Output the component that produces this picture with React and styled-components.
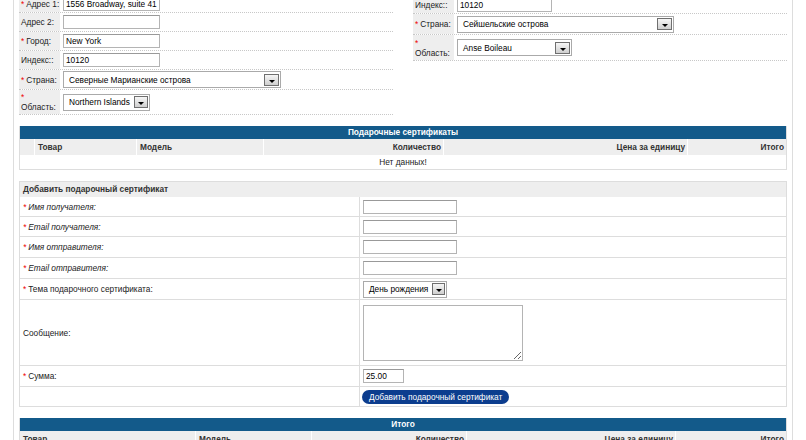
import React from 'react';
import styled, { createGlobalStyle } from 'styled-components';

const GlobalStyle = createGlobalStyle`
  body {
    margin: 0;
    background: #fff;
    font-family: "Liberation Sans", Arial, sans-serif;
    font-size: 8.3px;
    color: #222;
    overflow: hidden;
  }
`;

const Page = styled.div`
  margin: 0 13px;
  width: 780px;
  box-sizing: border-box;
  border-left: 1px solid #ddd;
  border-right: 1px solid #ddd;
  padding: 0 5px 40px;
`;

// ---- address blocks ----
const TopSection = styled.div`
  display: grid;
  grid-template-columns: 374px 374px;
  column-gap: 20px;
  align-items: start;
  margin-top: -4px;
`;

const AddrRow = styled.div`
  display: flex;
  height: ${p => p.$h || 19}px;
  box-sizing: border-box;
  border-bottom: 1px dotted #c8c8c8;
`;

const AddrLabel = styled.div`
  width: 41px;
  flex: none;
  box-sizing: border-box;
  background: #eee;
  padding: 0 2px;
  display: flex;
  align-items: center;
  white-space: nowrap;
  line-height: 10px;
`;

const AddrValue = styled.div`
  display: flex;
  align-items: center;
  padding-left: 3px;
`;

const Req = styled.span`
  color: #e00;
  margin-right: 2px;
`;

const TextInput = styled.input`
  width: ${p => p.$w || 97}px;
  height: 14px;
  box-sizing: border-box;
  border: 1px solid #b4b4b4;
  border-top-color: #999;
  padding: 0 2px;
  font-family: inherit;
  font-size: 8.3px;
  color: #000;
  background: #fff;
`;

const SelectBox = styled.div`
  display: inline-flex;
  align-items: center;
  justify-content: space-between;
  width: ${p => p.$w}px;
  height: 17px;
  box-sizing: border-box;
  border: 1px solid #aaa;
  padding: 0 1px 0 5px;
  background: #fff;
  color: #000;
  white-space: nowrap;
`;

const SelectBtn = styled.span`
  width: 15px;
  height: 12px;
  box-sizing: border-box;
  border: 1px solid #6f6f6f;
  background: linear-gradient(#f6f6f6, #cfcfcf);
  display: flex;
  align-items: flex-end;
  justify-content: center;
  padding-bottom: 2px;
  margin-left: 4px;
`;

const Arrow = styled.span`
  width: 0;
  height: 0;
  border-left: 3px solid transparent;
  border-right: 3px solid transparent;
  border-top: 3px solid #000;
`;

const Select = ({ w, children }) => (
  <SelectBox $w={w}>
    <span>{children}</span>
    <SelectBtn><Arrow /></SelectBtn>
  </SelectBox>
);

// ---- tables ----
const Table = styled.div`
  margin-top: 11px;
  border: 1px solid #ddd;
  border-top: 0;
`;

const BlueBar = styled.div`
  background: #135a8a;
  color: #fff;
  font-weight: bold;
  text-align: center;
  height: 13px;
  line-height: 13px;
`;

const GridRow = styled.div`
  display: grid;
  grid-template-columns: ${p => p.$cols};
`;

const HeadCell = styled.div`
  background: #eee;
  font-weight: bold;
  height: 16px;
  line-height: 16px;
  padding: 0 2px 0 3px;
  text-align: ${p => p.$align || 'left'};
  color: #333;
  & + & {
    border-left: 1px solid #fff;
  }
`;

const EmptyRow = styled.div`
  text-align: center;
  height: 14px;
  line-height: 14px;
  color: #222;
`;

const DataCell = styled.div`
  height: 18px;
  line-height: 18px;
  padding: 0 3px;
  border-top: 1px solid #ddd;
  text-align: ${p => p.$align || 'left'};
`;

// ---- gift form ----
const FormBox = styled.div`
  margin-top: 11px;
  border: 1px solid #ddd;
  border-bottom: 0;
`;

const FormHeader = styled.div`
  background: #eee;
  font-weight: bold;
  height: 15px;
  line-height: 15px;
  padding-left: 3px;
  color: #333;
`;

const FormRow = styled.div`
  display: flex;
  height: ${p => p.$h}px;
  box-sizing: border-box;
  border-bottom: 1px solid #ddd;
`;

const FormLabel = styled.div`
  width: 339px;
  flex: none;
  display: flex;
  align-items: center;
  padding-left: 3px;
  box-sizing: border-box;
  font-style: ${p => (p.$italic ? 'italic' : 'normal')};
`;

const FormValue = styled.div`
  flex: 1;
  display: flex;
  align-items: center;
  border-left: 1px solid #ddd;
  padding-left: 3px;
`;

const MessageArea = styled.textarea`
  width: 160px;
  height: 56px;
  box-sizing: border-box;
  border: 1px solid #b4b4b4;
  font-family: inherit;
  font-size: 8.3px;
`;

const Button = styled.button`
  height: 14px;
  line-height: 14px;
  padding: 0 7px;
  border: 0;
  border-radius: 7px;
  background: #0c3d8e;
  color: #fff;
  font-family: inherit;
  font-size: 8.3px;
  margin-left: -1px;
`;

const giftCols = '14px 102px 127px 180px 244px 99px';
const totalCols = '175px 116px 155px 209px 111px';

const leftAddr = [
  { label: 'Адрес 1:', req: true, value: '1556 Broadway, suite 41', h: 17 },
  { label: 'Адрес 2:', value: '' },
  { label: 'Город:', req: true, value: 'New York' },
  { label: 'Индекс::', value: '10120' },
];

const giftFields = [
  { label: 'Имя получателя:', italic: true },
  { label: 'Email получателя:', italic: true },
  { label: 'Имя отправителя:', italic: true },
  { label: 'Email отправителя:', italic: true },
];

export default function App() {
  return (
    <>
      <GlobalStyle />
      <Page>
        <TopSection>
          <div>
            {leftAddr.map(r => (
              <AddrRow key={r.label} $h={r.h}>
                <AddrLabel>{r.req && <Req>*</Req>}{r.label}</AddrLabel>
                <AddrValue><TextInput defaultValue={r.value} /></AddrValue>
              </AddrRow>
            ))}
            <AddrRow $h={20}>
              <AddrLabel><Req>*</Req>Страна:</AddrLabel>
              <AddrValue><Select w={218}>Северные Марианские острова</Select></AddrValue>
            </AddrRow>
            <AddrRow $h={25}>
              <AddrLabel><span><Req>*</Req><br />Область:</span></AddrLabel>
              <AddrValue><Select w={87}>Northern Islands</Select></AddrValue>
            </AddrRow>
          </div>
          <div>
            <AddrRow $h={18}>
              <AddrLabel>Индекс::</AddrLabel>
              <AddrValue><TextInput $w={95} defaultValue="10120" /></AddrValue>
            </AddrRow>
            <AddrRow $h={21}>
              <AddrLabel><Req>*</Req>Страна:</AddrLabel>
              <AddrValue><Select w={217}>Сейшельские острова</Select></AddrValue>
            </AddrRow>
            <AddrRow $h={26}>
              <AddrLabel><span><Req>*</Req><br />Область:</span></AddrLabel>
              <AddrValue><Select w={115}>Anse Boileau</Select></AddrValue>
            </AddrRow>
          </div>
        </TopSection>

        <Table>
          <BlueBar>Подарочные сертификаты</BlueBar>
          <GridRow $cols={giftCols}>
            <HeadCell />
            <HeadCell>Товар</HeadCell>
            <HeadCell>Модель</HeadCell>
            <HeadCell $align="right">Количество</HeadCell>
            <HeadCell $align="right">Цена за единицу</HeadCell>
            <HeadCell $align="right">Итого</HeadCell>
          </GridRow>
          <EmptyRow>Нет данных!</EmptyRow>
        </Table>

        <FormBox>
          <FormHeader>Добавить подарочный сертификат</FormHeader>
          {giftFields.map((f, i) => (
            <FormRow key={f.label} $h={i < 2 ? 20 : 21}>
              <FormLabel $italic={f.italic}><Req>*</Req>{f.label}</FormLabel>
              <FormValue><TextInput $w={94} /></FormValue>
            </FormRow>
          ))}
          <FormRow $h={21}>
            <FormLabel><Req>*</Req>Тема подарочного сертификата:</FormLabel>
            <FormValue><Select w={84}>День рождения</Select></FormValue>
          </FormRow>
          <FormRow $h={66}>
            <FormLabel>Сообщение:</FormLabel>
            <FormValue><MessageArea /></FormValue>
          </FormRow>
          <FormRow $h={21}>
            <FormLabel><Req>*</Req>Сумма:</FormLabel>
            <FormValue><TextInput $w={41} defaultValue="25.00" /></FormValue>
          </FormRow>
          <FormRow $h={20}>
            <FormLabel />
            <FormValue><Button>Добавить подарочный сертификат</Button></FormValue>
          </FormRow>
        </FormBox>

        <Table>
          <BlueBar>Итого</BlueBar>
          <GridRow $cols={totalCols}>
            <HeadCell>Товар</HeadCell>
            <HeadCell>Модель</HeadCell>
            <HeadCell $align="right">Количество</HeadCell>
            <HeadCell $align="right">Цена за единицу</HeadCell>
            <HeadCell $align="right">Итого</HeadCell>
          </GridRow>
          <GridRow $cols={totalCols}>
            <DataCell>Подарочный сертификат</DataCell>
            <DataCell>—</DataCell>
            <DataCell $align="right">1</DataCell>
            <DataCell $align="right">25.00</DataCell>
            <DataCell $align="right">25.00</DataCell>
          </GridRow>
        </Table>
      </Page>
    </>
  );
}
